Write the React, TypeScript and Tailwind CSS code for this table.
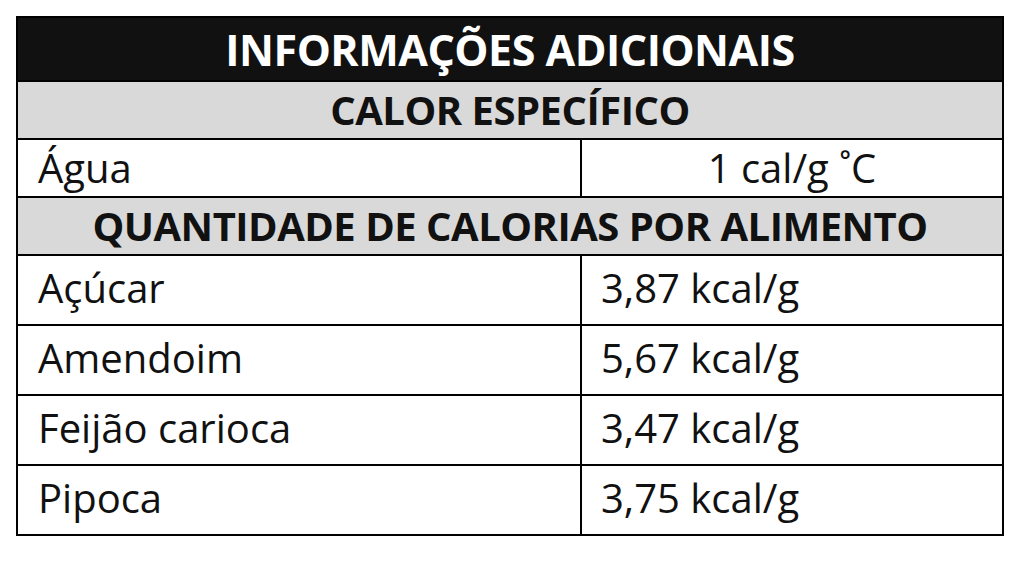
const foods = [
  { name: "Açúcar", value: "3,87 kcal/g" },
  { name: "Amendoim", value: "5,67 kcal/g" },
  { name: "Feijão carioca", value: "3,47 kcal/g" },
  { name: "Pipoca", value: "3,75 kcal/g" },
];

export default function App() {
  return (
    <div className="h-[565px] w-[1035px] bg-white pl-4 pt-4 font-['Open_Sans',sans-serif] text-[#111]">
      <table className="w-[988px] table-fixed border-collapse">
        <colgroup>
          <col className="w-[564px]" />
          <col />
        </colgroup>
        <tbody>
          <tr className="h-[64px]">
            <td colSpan={2} className="border-2 border-black bg-[#111] text-center text-[43px] font-bold leading-none tracking-[-0.5px] text-white">
              INFORMAÇÕES ADICIONAIS
            </td>
          </tr>
          <tr className="h-[58px]">
            <td colSpan={2} className="border-2 border-black bg-[#d9d9d9] text-center text-[40px] font-bold leading-none tracking-[-0.5px]">
              CALOR ESPECÍFICO
            </td>
          </tr>
          <tr className="h-[58px]">
            <td className="border-2 border-black pl-[20px] text-[40px] leading-none">Água</td>
            <td className="border-2 border-black text-center text-[40px] leading-none">1 cal/g ˚C</td>
          </tr>
          <tr className="h-[58px]">
            <td colSpan={2} className="border-2 border-black bg-[#d9d9d9] text-center text-[40px] font-bold leading-none tracking-[-0.5px]">
              QUANTIDADE DE CALORIAS POR ALIMENTO
            </td>
          </tr>
          {foods.map((f) => (
            <tr key={f.name} className="h-[70px]">
              <td className="border-2 border-black pb-1 pl-[20px] text-[40px] leading-none">{f.name}</td>
              <td className="border-2 border-black pb-1 pl-[19px] text-[40px] leading-none">{f.value}</td>
            </tr>
          ))}
        </tbody>
      </table>
    </div>
  );
}
